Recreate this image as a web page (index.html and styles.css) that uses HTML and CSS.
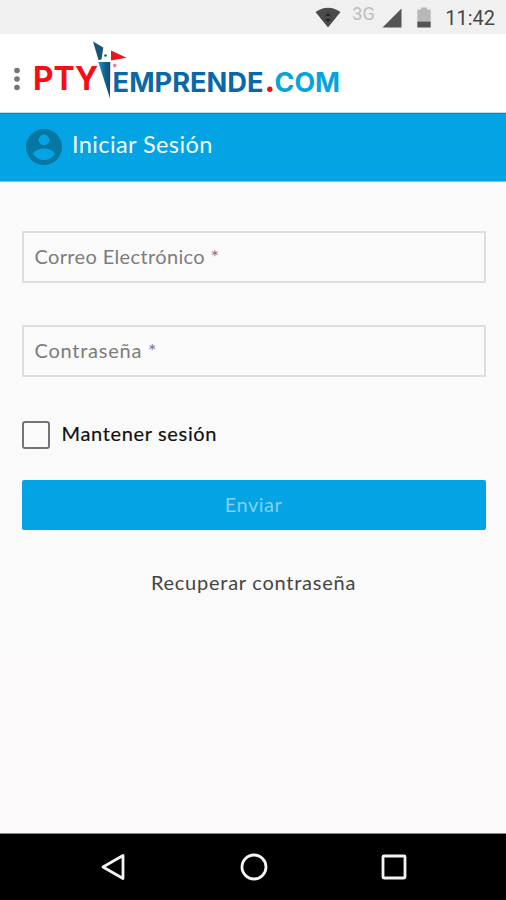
FILE: index.html
```html
<!DOCTYPE html>
<html lang="es">
<head>
<meta charset="utf-8">
<title>PTY Emprende</title>
<link rel="stylesheet" href="styles.css">
</head>
<body>
<div class="status">
  <svg class="wifi" width="26" height="21" viewBox="0 0 26 21"><path d="M.5 5Q13-3.500 25.500 5L13 20.500Z" fill="#4b4b4b"/><path d="M10 9l3-3 3 3zM10 12h6l-3 3z" fill="#242424"/></svg>
  <span class="network">3G</span>
  <svg class="signal" width="20" height="20" viewBox="0 0 20 20"><path d="M19.500 .5V19.500H.5Z" fill="#555"/></svg>
  <svg class="battery" width="14" height="21" viewBox="0 0 14 21"><path d="M4 .5h6v2h3q.7 0 .7.7V14.500H.3V3.200q0-.7.7-.7h3z" fill="#b8b8b8"/><path d="M.3 14.500h13.400V20q0 .6-.6.6H.9q-.6 0-.6-.6z" fill="#555"/></svg>
  <time class="clock">11:42</time>
</div>
<header class="header">
  <svg class="dots" width="6" height="24" viewBox="0 0 6 24" fill="#747474"><circle cx="3" cy="3.500" r="2.800"/><circle cx="3" cy="12" r="2.800"/><circle cx="3" cy="20.500" r="2.800"/></svg>
  <svg class="logo" width="310" height="70" viewBox="32 36 310 70">
    <defs><linearGradient id="pin" x1="0" x2="1" y1="0" y2="0"><stop offset="0" stop-color="#159dcc"/><stop offset=".55" stop-color="#12648e"/><stop offset="1" stop-color="#164a72"/></linearGradient></defs>
    <g class="word">
      <text x="33" y="90.300" font-size="32" textLength="65" lengthAdjust="spacingAndGlyphs" fill="#f80d16">PTY</text>
      <text x="112.600" y="92" font-size="26.500" textLength="151" lengthAdjust="spacingAndGlyphs" fill="#0a67a8">EMPRENDE</text>
      <circle cx="269.800" cy="89.200" r="2.700" fill="#f80d16"/>
      <text x="274.600" y="92" font-size="26.500" textLength="65.500" lengthAdjust="spacingAndGlyphs" fill="#06a4dd">COM</text>
    </g>
    <path d="M93 41.500L103.300 47.500L101.500 59.500L98.500 60Z" fill="#17567b"/>
    <circle cx="105.500" cy="55.500" r="1.300" fill="#17567b"/>
    <path d="M111 50.500L126.500 57.800L111 60.500Z" fill="#e7151e"/>
    <path d="M98.300 62H110.300L110 98.500Z" fill="url(#pin)"/>
    <path d="M114.800 63l.8 1.500 1.700.2-1.300 1.100.3 1.700-1.500-.8-1.500.8.3-1.700-1.300-1.100 1.700-.2z" fill="#ef6f78"/>
  </svg>
</header>
<div class="title-bar">
  <svg width="36" height="36" viewBox="2 2 20 20" fill="#0676a2"><path d="M12 2C6.480 2 2 6.480 2 12s4.480 10 10 10 10-4.480 10-10S17.520 2 12 2zm0 3c1.660 0 3 1.340 3 3s-1.340 3-3 3-3-1.340-3-3 1.340-3 3-3zm0 14.200c-2.500 0-4.710-1.280-6-3.220.03-1.990 4-3.080 6-3.080 1.990 0 5.970 1.090 6 3.080-1.290 1.940-3.500 3.220-6 3.220z"/></svg>
  <h1 class="title">Iniciar Sesión</h1>
</div>
<main class="form">
  <div class="field"><span class="email">Correo Electrónico *</span></div>
  <div class="field"><span class="password">Contraseña *</span></div>
  <div class="remember"><span class="box"></span><span class="remember-label">Mantener sesión</span></div>
  <div class="submit"><span>Enviar</span></div>
  <div class="recover"><span>Recuperar contraseña</span></div>
</main>
<div class="blank"></div>
<nav class="nav">
  <svg width="30" height="30" viewBox="0 0 30 30"><path d="M25 3.500V26.500L5 15Z"/></svg>
  <svg width="30" height="30" viewBox="0 0 30 30"><circle cx="15" cy="15" r="12"/></svg>
  <svg width="30" height="30" viewBox="0 0 30 30"><rect x="4" y="4" width="22" height="22" rx="1"/></svg>
</nav>
</body>
</html>
```

FILE: styles.css
```css
* { box-sizing: border-box; }
body {
  margin: 0;
  width: 506px;
  height: 900px;
  display: flex;
  flex-direction: column;
  overflow: hidden;
  background: #fcfafb;
  font-family: Lato, "Liberation Sans", sans-serif;
}
svg { display: block; flex: none; }
.status {
  height: 34px;
  display: flex;
  align-items: flex-start;
  justify-content: flex-end;
  padding: 7px 11px 0 0;
  background: #f0f0f0;
  font-family: Roboto, sans-serif;
}
.network { margin: -4px 7px 0 11px; font-size: 18px; line-height: 21px; color: #bdbdbd; letter-spacing: .3px; }
.signal { margin-top: 1px; }
.battery { margin-left: 15px; }
.clock { margin-left: 14px; font-size: 20px; line-height: 23px; color: #474747; }
.header {
  height: 79px;
  display: flex;
  align-items: flex-start;
  padding-left: 14px;
  background: #fff;
  border-bottom: 1px solid #b9e1f2;
}
.dots { margin-top: 33px; }
.logo { margin: 2px 0 0 12px; }
.word { font-family: Inter, sans-serif; font-weight: 700; }
.title-bar {
  height: 69px;
  display: flex;
  align-items: flex-start;
  gap: 10px;
  padding: 15px 0 0 26px;
  background: #04a3e4;
  border-top: 1px solid #177fb2;
  border-bottom: 1px solid #68c5ec;
}
.title { margin: 1px 0 0; font-size: 23.5px; line-height: 28px; font-weight: 400; letter-spacing: .4px; color: #f5fcff; white-space: nowrap; }
.form { height: 474px; padding: 49px 20.5px 0 21.5px; background: #fafafa; }
.field {
  height: 52px;
  padding: 11px;
  margin-bottom: 42px;
  border: 2px solid #dedede;
  font-size: 20px;
  line-height: 24px;
  color: #7c7c7c;
}
.email { letter-spacing: .36px; }
.password { letter-spacing: .76px; }
.remember { display: flex; gap: 12px; height: 28px; margin-top: 44px; }
.box { width: 28px; height: 28px; border: 2px solid #747474; border-radius: 3px; }
.remember-label { font-size: 20px; line-height: 24px; letter-spacing: .66px; color: #111; -webkit-text-stroke: .2px #111; }
.submit {
  height: 50px;
  margin-top: 31px;
  padding-top: 12px;
  border-radius: 2px;
  background: #04a3e4;
  color: #81d0f1;
  font-size: 20px;
  line-height: 24px;
  letter-spacing: .5px;
  text-align: center;
}
.recover { margin-top: 40px; font-size: 20px; line-height: 24px; letter-spacing: .75px; text-align: center; color: #444; }
.blank { flex: 1; background: #fcfafb; }
.nav {
  height: 67px;
  display: flex;
  justify-content: space-between;
  padding: 18px 97px 0 98px;
  background: #000;
  border-top: 1px solid #888;
}
.nav svg { fill: none; stroke: #f4f4f4; stroke-width: 2.8; stroke-linejoin: round; }
```
